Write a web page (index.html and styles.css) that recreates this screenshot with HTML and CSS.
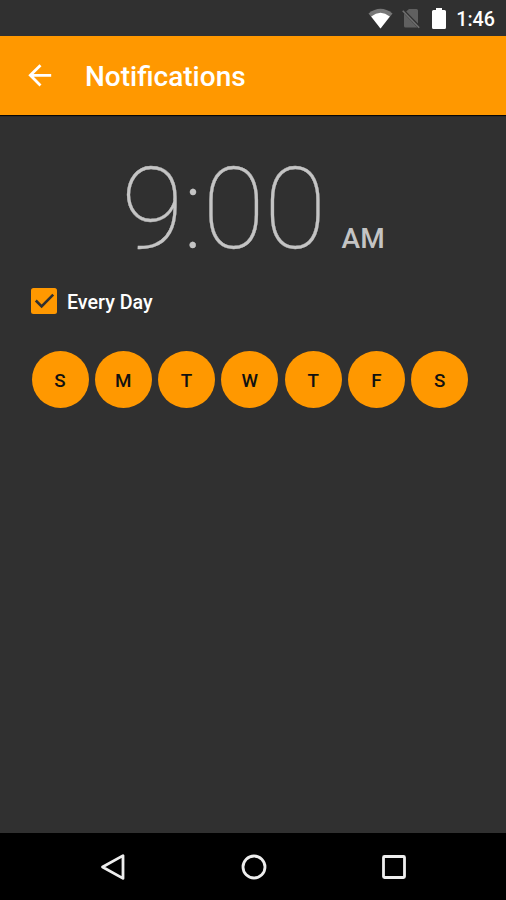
FILE: index.html
```
<!DOCTYPE html>
<html lang="en">
<head>
    <meta charset="UTF-8">
    <meta name="viewport" content="width=device-width, initial-scale=1.0">
    <title>Notifications</title>
    <link rel="stylesheet" href="styles.css">
</head>
<body>
    <div class="status-bar">
        <svg class="wifi" width="25" height="21" viewBox="0 0 25 21">
            <path d="M0.5 5.5Q12.5 -3.8 24.5 5.5L12.5 20.5Z" fill="#777"/>
            <path d="M3.2 8.4Q12.5 1 21.8 8.4L12.5 20.5Z" fill="#fff"/>
        </svg>
        <svg class="no-sim" width="18" height="21" viewBox="0 0 18 21">
            <path d="M7 1H14.5Q16 1 16 2.5V15.5L4.2 3.6Z" fill="#606060"/>
            <path d="M2 5.5L15.5 19.5H3.5Q2 19.5 2 18Z" fill="#606060"/>
            <path d="M0.7 2.8L17.2 19.8" stroke="#707070" stroke-width="1.6"/>
        </svg>
        <svg class="battery" width="14" height="21" viewBox="0 0 14 21">
            <path d="M4 0H10V2H12.5Q14 2 14 3.5V19.5Q14 21 12.5 21H1.5Q0 21 0 19.5V3.5Q0 2 1.5 2H4Z" fill="#fff"/>
        </svg>
        <span class="clock">1:46</span>
    </div>

    <header class="app-bar">
        <svg class="back" width="24" height="24" viewBox="0 0 24 24">
            <path d="M12.5 1.2L2.3 11.3L12.5 21.4M2.3 11.3H23.2" fill="none" stroke="#fff" stroke-width="2.8"/>
        </svg>
        <h1>Notifications</h1>
    </header>

    <main class="content">
        <div class="time">
            <span class="digits">9:00</span>
            <span class="period">AM</span>
        </div>

        <label class="every-day">
            <svg width="26" height="26" viewBox="0 0 26 26">
                <rect width="26" height="26" rx="2.5" fill="#ff9800"/>
                <path d="M4.8 12.5L10.6 18.3L22.2 6.7" fill="none" stroke="#303030" stroke-width="2.6"/>
            </svg>
            <span>Every Day</span>
        </label>

        <div class="days">
            <button>S</button>
            <button>M</button>
            <button>T</button>
            <button>W</button>
            <button>T</button>
            <button>F</button>
            <button>S</button>
        </div>
    </main>

    <nav class="nav-bar">
        <svg width="28" height="28" viewBox="0 0 28 28">
            <path d="M3.5 14L24 2.6V25.4Z"/>
        </svg>
        <svg width="28" height="28" viewBox="0 0 28 28">
            <circle cx="14" cy="14" r="11"/>
        </svg>
        <svg width="28" height="28" viewBox="0 0 28 28">
            <rect x="3.5" y="3.5" width="21" height="21" rx="1"/>
        </svg>
    </nav>
</body>
</html>
```

FILE: styles.css
```
* {
    box-sizing: border-box;
}

body {
    margin: 0;
    height: 900px;
    display: flex;
    flex-direction: column;
    font-family: Roboto, sans-serif;
    background-color: #303030;
    color: #fff;
}

svg {
    display: block;
    flex: none;
}

.status-bar {
    height: 36px;
    display: flex;
    align-items: center;
    justify-content: flex-end;
    padding-right: 11px;
}

.no-sim {
    margin-left: 9px;
}

.battery {
    margin-left: 12px;
}

.clock {
    margin-left: 10px;
    padding-top: 2px;
    font-size: 19.7px;
    font-weight: 500;
}

.app-bar {
    height: 79px;
    display: flex;
    align-items: center;
    padding-left: 28px;
    background-color: #ff9800; /* Orange toolbar */
    box-shadow: 0 1px 1px rgba(0, 0, 0, 0.85);
}

.app-bar h1 {
    margin: 2px 0 0 33px;
    font-size: 28px;
    font-weight: 500;
}

.content {
    flex: 1;
    padding: 41px 31px 0 31px;
}

.time {
    display: flex;
    align-items: baseline;
    justify-content: center;
    height: 132px;
    color: #c4c4c4;
}

.digits {
    font-size: 114px;
    font-weight: 100;
    line-height: 106px;
    letter-spacing: -0.8px;
    -webkit-text-stroke: 0.3px #c4c4c4;
}

.period {
    margin-left: 16px;
    font-size: 28px;
    font-weight: 500;
}

.every-day {
    display: flex;
    align-items: center;
    width: max-content;
    font-size: 19.7px;
    font-weight: 500;
}

.every-day span {
    margin: 2px 0 0 10px;
}

.days {
    display: flex;
    gap: 6.3px;
    margin: 37px 0 0 0.5px;
}

.days button {
    width: 57px;
    height: 57px;
    padding: 2px 0 0;
    border: none;
    border-radius: 50%;
    background-color: #ff9800;
    color: #111;
    font-family: inherit;
    font-size: 18.8px;
    font-weight: 500;
}

.nav-bar {
    height: 67px;
    display: flex;
    align-items: center;
    justify-content: center;
    gap: 112.5px;
    padding-left: 1px;
    background-color: #000;
}

.nav-bar svg {
    fill: none;
    stroke: #eee;
    stroke-width: 2.8;
    stroke-linejoin: round;
}
```
